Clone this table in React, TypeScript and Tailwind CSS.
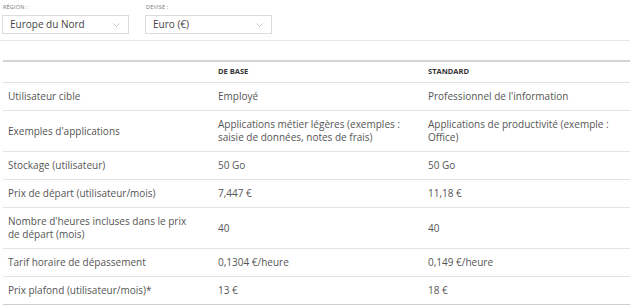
import React from 'react';

type Row = { label: string; base: string; standard: string };

const rows: Row[] = [
  { label: 'Utilisateur cible', base: 'Employé', standard: "Professionnel de l'information" },
  {
    label: "Exemples d'applications",
    base: 'Applications métier légères (exemples : saisie de données, notes de frais)',
    standard: 'Applications de productivité (exemple : Office)',
  },
  { label: 'Stockage (utilisateur)', base: '50 Go', standard: '50 Go' },
  { label: 'Prix de départ (utilisateur/mois)', base: '7,447 €', standard: '11,18 €' },
  { label: "Nombre d'heures incluses dans le prix de départ (mois)", base: '40', standard: '40' },
  { label: 'Tarif horaire de dépassement', base: '0,1304 €/heure', standard: '0,149 €/heure' },
  { label: 'Prix plafond (utilisateur/mois)*', base: '13 €', standard: '18 €' },
];

const Chevron = () => (
  <svg width="7" height="4" viewBox="0 0 7 4" fill="none" stroke="#c2c2c2" strokeWidth="0.9">
    <path d="M0.5 0.5 L3.5 3.5 L6.5 0.5" />
  </svg>
);

const Select = ({ label, value }: { label: string; value: string }) => (
  <div className="flex flex-col w-[127px]">
    <span className="text-[5.5px] leading-[8px] uppercase text-[#777] tracking-[0.2px] pl-[1px]">{label}</span>
    <div className="mt-[4px] h-[19px] border border-[#dcdcdc] bg-white flex items-center justify-between pl-[7px] pr-[8px]">
      <span className="text-[10px] text-[#444]">{value}</span>
      <Chevron />
    </div>
  </div>
);

export default function App() {
  return (
    <div className="w-[630px] h-[308px] bg-white overflow-hidden font-['Open_Sans',sans-serif] text-[#555]">
      <div className="flex gap-[16px] pl-[2px] pt-[3px] pb-[6px] border-b border-[#e6e6e6]">
        <Select label="Région :" value="Europe du Nord" />
        <Select label="Devise :" value="Euro (€)" />
      </div>
      <div className="pt-[19px] pl-[3px]">
        <div className="grid grid-cols-[207px_210px_210px] border-t-2 border-[#d4d4d4] border-b border-b-[#e2e2e2] h-[23px] items-center">
          <div />
          <div className="pl-[8px] text-[7.5px] font-bold text-[#333]">DE BASE</div>
          <div className="pl-[8px] text-[7.5px] font-bold text-[#333]">STANDARD</div>
        </div>
        {rows.map((r, i) => (
          <div
            key={i}
            className={`grid grid-cols-[207px_210px_210px] items-center border-b ${i === rows.length - 1 ? 'border-[#cfcfcf]' : 'border-[#e4e4e4]'} py-[7px] text-[10px] leading-[13px]`}
          >
            <div className="pl-[5px] pr-[20px]">{r.label}</div>
            <div className="pl-[8px] pr-[14px]">{r.base}</div>
            <div className="pl-[8px] pr-[14px]">{r.standard}</div>
          </div>
        ))}
      </div>
    </div>
  );
}
